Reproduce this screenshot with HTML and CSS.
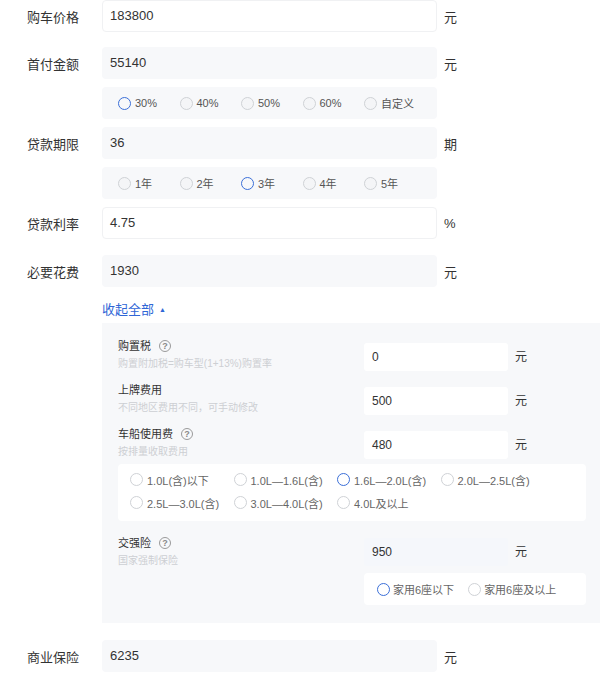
FILE: index.html
```html
<!DOCTYPE html>
<html lang="zh-CN">
<head>
<meta charset="utf-8">
<title>购车计算器</title>
<link rel="stylesheet" href="styles.css">
</head>
<body>
<div class="calc">
  <div class="row row-first">
    <div class="lbl">购车价格</div>
    <div class="field field-white">183800</div>
    <span class="unit">元</span>
  </div>

  <div class="row row-tight">
    <div class="lbl">首付金额</div>
    <div class="field">55140</div>
    <span class="unit">元</span>
  </div>
  <div class="opts">
    <span class="opt"><i class="radio on"></i>30%</span>
    <span class="opt"><i class="radio"></i>40%</span>
    <span class="opt"><i class="radio"></i>50%</span>
    <span class="opt"><i class="radio"></i>60%</span>
    <span class="opt"><i class="radio"></i>自定义</span>
  </div>

  <div class="row row-tight">
    <div class="lbl">贷款期限</div>
    <div class="field">36</div>
    <span class="unit">期</span>
  </div>
  <div class="opts">
    <span class="opt"><i class="radio"></i>1年</span>
    <span class="opt"><i class="radio"></i>2年</span>
    <span class="opt"><i class="radio on"></i>3年</span>
    <span class="opt"><i class="radio"></i>4年</span>
    <span class="opt"><i class="radio"></i>5年</span>
  </div>

  <div class="row">
    <div class="lbl">贷款利率</div>
    <div class="field field-white">4.75</div>
    <span class="unit">%</span>
  </div>

  <div class="row row-last">
    <div class="lbl">必要花费</div>
    <div class="field">1930</div>
    <span class="unit">元</span>
  </div>

  <div class="toggle">收起全部<span class="tri">▲</span></div>

  <div class="panel">
    <div class="prow">
      <div class="pl">
        <div class="pl-title">购置税<span class="help">?</span></div>
        <div class="pl-sub">购置附加税=购车型(1+13%)购置率</div>
      </div>
      <div class="pfield">0</div>
      <span class="punit">元</span>
    </div>
    <div class="prow">
      <div class="pl">
        <div class="pl-title">上牌费用</div>
        <div class="pl-sub">不同地区费用不同，可手动修改</div>
      </div>
      <div class="pfield">500</div>
      <span class="punit">元</span>
    </div>
    <div class="prow prow-tight">
      <div class="pl">
        <div class="pl-title">车船使用费<span class="help">?</span></div>
        <div class="pl-sub">按排量收取费用</div>
      </div>
      <div class="pfield">480</div>
      <span class="punit">元</span>
    </div>
    <div class="dbox">
      <span class="dopt"><i class="radio"></i>1.0L(含)以下</span>
      <span class="dopt"><i class="radio"></i>1.0L—1.6L(含)</span>
      <span class="dopt"><i class="radio on"></i>1.6L—2.0L(含)</span>
      <span class="dopt"><i class="radio"></i>2.0L—2.5L(含)</span>
      <span class="dopt"><i class="radio"></i>2.5L—3.0L(含)</span>
      <span class="dopt"><i class="radio"></i>3.0L—4.0L(含)</span>
      <span class="dopt"><i class="radio"></i>4.0L及以上</span>
    </div>
    <div class="prow prow-ins">
      <div class="pl">
        <div class="pl-title">交强险<span class="help">?</span></div>
        <div class="pl-sub">国家强制保险</div>
      </div>
      <div class="pcol">
        <div class="pline">
          <div class="pfield pfield-gray">950</div>
          <span class="punit">元</span>
        </div>
        <div class="sbox">
          <span class="sopt"><i class="radio on"></i>家用6座以下</span>
          <span class="sopt"><i class="radio"></i>家用6座及以上</span>
        </div>
      </div>
    </div>
  </div>

  <div class="row">
    <div class="lbl">商业保险</div>
    <div class="field">6235</div>
    <span class="unit">元</span>
  </div>
</div>
</body>
</html>
```

FILE: styles.css
```css
* { box-sizing: border-box; }
html, body {
  margin: 0;
  padding: 0;
  background: #fff;
}
body {
  font-family: "Liberation Sans", "Noto Sans CJK SC", sans-serif;
  color: #333;
  width: 600px;
  overflow: hidden;
}
.calc {
  padding-left: 27px;
}
.row {
  display: flex;
  align-items: center;
  height: 32px;
  margin-bottom: 16px;
}
.row-first { margin-bottom: 15px; }
.row-tight { margin-bottom: 8px; }
.row-last { margin-bottom: 0; }
.lbl {
  width: 75px;
  font-size: 13px;
  color: #333;
}
.field {
  width: 335px;
  height: 32px;
  line-height: 32px;
  padding: 0 8px;
  background: #f7f8fa;
  border-radius: 4px;
  font-size: 13px;
  color: #333;
}
.field-white {
  background: #fff;
  border: 1px solid #f0f1f3;
  line-height: 30px;
  padding: 0 7px;
}
.unit {
  margin-left: 7px;
  font-size: 13px;
  color: #333;
}
.opts {
  margin-left: 75px;
  width: 335px;
  height: 32px;
  margin-bottom: 8px;
  background: #f7f8fa;
  border-radius: 4px;
  padding-left: 16px;
  display: flex;
  align-items: center;
}
.opt {
  width: 61.5px;
  display: flex;
  align-items: center;
  font-size: 11px;
  color: #555;
}
.radio {
  display: inline-block;
  width: 13px;
  height: 13px;
  border: 1px solid #cfd2d6;
  border-radius: 50%;
  background: #fff;
  margin-right: 4px;
  flex: none;
}
.radio.on {
  border: 1.5px solid #3b6fd8;
}
.opts .radio { background: #f4f5f7; }
.opts .radio.on { background: transparent; }
.toggle {
  margin-left: 75px;
  padding-top: 14px;
  height: 36px;
  line-height: 18px;
  font-size: 13px;
  color: #2f66d6;
  display: flex;
  align-items: flex-start;
}
.tri {
  font-size: 7px;
  margin-left: 5px;
  line-height: 18px;
}
.panel {
  margin-left: 75px;
  width: 498px;
  background: #f7f8fa;
  padding: 20px 14px 18px 16px;
  margin-bottom: 17px;
}
.prow {
  display: flex;
  align-items: flex-start;
  margin-bottom: 16px;
}
.prow-tight { margin-bottom: 5px; }
.prow-ins { margin-top: 17px; margin-bottom: 0; }
.pl {
  width: 246px;
  margin-top: -4px;
}
.prow-ins .pl { margin-top: -2px; }
.pl-title {
  font-size: 11px;
  line-height: 14px;
  color: #333;
  display: flex;
  align-items: center;
}
.pl-sub {
  margin-top: 4px;
  font-size: 10px;
  line-height: 14px;
  color: #cdcfd3;
  white-space: nowrap;
}
.help {
  display: inline-flex;
  align-items: center;
  justify-content: center;
  width: 12px;
  height: 12px;
  margin-left: 8px;
  border: 1px solid #9a9a9a;
  border-radius: 50%;
  font-size: 9px;
  font-weight: bold;
  line-height: 1;
  color: #888;
}
.pfield {
  width: 144px;
  height: 28px;
  line-height: 28px;
  padding: 0 8px;
  background: #fff;
  border-radius: 3px;
  font-size: 12px;
  color: #333;
}
.pfield-gray {
  background: #f5f7fb;
}
.punit {
  margin-left: 7px;
  font-size: 12px;
  line-height: 28px;
  color: #333;
}
.pline {
  display: flex;
  align-items: flex-start;
}
.dbox {
  width: 468px;
  background: #fff;
  border-radius: 4px;
  padding: 4px 12px 7px 12px;
  display: flex;
  flex-wrap: wrap;
}
.dopt {
  width: 103.5px;
  height: 23px;
  display: flex;
  align-items: center;
  font-size: 11px;
  color: #666;
  white-space: nowrap;
}
.sbox {
  margin-top: 7px;
  width: 222px;
  height: 32px;
  background: #fff;
  border-radius: 4px;
  padding-left: 13px;
  display: flex;
  align-items: center;
}
.sopt {
  display: flex;
  align-items: center;
  font-size: 11px;
  color: #666;
  margin-right: 14px;
  white-space: nowrap;
}
.sopt .radio { margin-right: 3px; }
```
